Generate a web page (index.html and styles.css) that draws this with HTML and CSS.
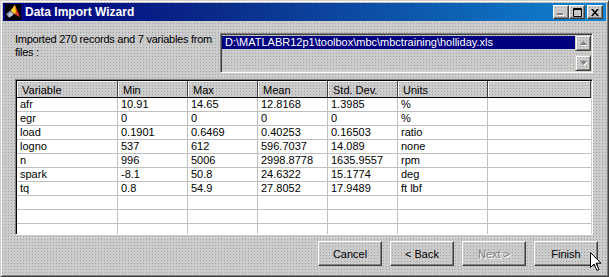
FILE: index.html
```html
<!DOCTYPE html>
<html lang="en">
<head>
    <meta charset="UTF-8">
    <meta name="viewport" content="width=device-width, initial-scale=1.0">
    <title>Data Import Wizard</title>
    <link rel="stylesheet" href="styles.css">
</head>
<body>
    <div class="window">
        <div class="titlebar">
            <svg class="app-icon" width="16" height="16" viewBox="0 0 16 16">
                <rect width="16" height="16" fill="#000"/>
                <polygon points="1,10 6,6 9,10 4,14" fill="#7b8aa8"/>
                <polygon points="6,6 10,1 15,13 9,10" fill="#e0401c"/>
                <polygon points="6,6 10,1 11,8 9,10" fill="#f8d020"/>
                <polygon points="3,11 6,8 8,11 5,13" fill="#c0c8d8"/>
            </svg>
            <span class="title">Data Import Wizard</span>
            <div class="caption-buttons">
                <span class="cap-btn">
                    <svg width="8" height="8" viewBox="0 0 8 8"><rect x="1" y="6" width="6" height="2" fill="#fff"/><rect x="0" y="5" width="6" height="2" fill="#808080"/></svg>
                </span>
                <span class="cap-btn">
                    <svg width="9" height="9" viewBox="0 0 9 9"><path d="M0.5 0.5h8v8h-8z M0 1.5h9" fill="none" stroke="#000"/></svg>
                </span>
                <span class="cap-btn close">
                    <svg width="8" height="7" viewBox="0 0 8 7"><path d="M0 0h2l2 2.5L6 0h2L5 3.5L8 7H6L4 4.5L2 7H0l3-3.5z" fill="#000"/></svg>
                </span>
            </div>
        </div>

        <div class="content">
            <div class="source">
                <p class="source-label">Imported 270 records and 7 variables from<br>files :</p>
                <div class="listbox">
                    <ul class="file-list">
                        <li class="selected">D:\MATLABR12p1\toolbox\mbc\mbctraining\holliday.xls</li>
                    </ul>
                    <div class="scrollbar">
                        <span class="scroll-btn">
                            <svg width="7" height="5" viewBox="0 0 7 5"><polygon points="4.5,1 8,5 1,5" fill="#fff"/><polygon points="3.5,0 7,4 0,4" fill="#808080"/></svg>
                        </span>
                        <span class="scroll-btn">
                            <svg width="7" height="5" viewBox="0 0 7 5"><polygon points="1,1 8,1 4.5,5" fill="#fff"/><polygon points="0,0 7,0 3.5,4" fill="#808080"/></svg>
                        </span>
                    </div>
                </div>
            </div>

            <div class="grid-box">
                <table class="grid">
                    <colgroup>
                        <col style="width:101px"><col style="width:70px"><col style="width:70px"><col style="width:70px"><col style="width:70px"><col style="width:90px"><col style="width:103px">
                    </colgroup>
                    <thead>
                        <tr><th>Variable</th><th>Min</th><th>Max</th><th>Mean</th><th>Std. Dev.</th><th>Units</th><th></th></tr>
                    </thead>
                    <tbody>
                        <tr><td>afr</td><td>10.91</td><td>14.65</td><td>12.8168</td><td>1.3985</td><td>%</td><td></td></tr>
                        <tr><td>egr</td><td>0</td><td>0</td><td>0</td><td>0</td><td>%</td><td></td></tr>
                        <tr><td>load</td><td>0.1901</td><td>0.6469</td><td>0.40253</td><td>0.16503</td><td>ratio</td><td></td></tr>
                        <tr><td>logno</td><td>537</td><td>612</td><td>596.7037</td><td>14.089</td><td>none</td><td></td></tr>
                        <tr><td>n</td><td>996</td><td>5006</td><td>2998.8778</td><td>1635.9557</td><td>rpm</td><td></td></tr>
                        <tr><td>spark</td><td>-8.1</td><td>50.8</td><td>24.6322</td><td>15.1774</td><td>deg</td><td></td></tr>
                        <tr><td>tq</td><td>0.8</td><td>54.9</td><td>27.8052</td><td>17.9489</td><td>ft lbf</td><td></td></tr>
                        <tr><td></td><td></td><td></td><td></td><td></td><td></td><td></td></tr>
                        <tr><td></td><td></td><td></td><td></td><td></td><td></td><td></td></tr>
                        <tr><td></td><td></td><td></td><td></td><td></td><td></td><td></td></tr>
                    </tbody>
                </table>
            </div>

            <div class="actions">
                <button class="push">Cancel</button>
                <button class="push">&lt; Back</button>
                <button class="push" disabled>Next &gt;</button>
                <button class="push">Finish</button>
                <svg class="cursor" width="12" height="20" viewBox="0 0 12 20">
                    <path d="M0.5 0.5v15l3.5-3.5 3 6.5 2-1-3-6.3h5z" fill="#fff" stroke="#000"/>
                </svg>
            </div>
        </div>
    </div>
</body>
</html>
```

FILE: styles.css
```css
* {
    box-sizing: border-box;
}

body {
    margin: 0;
    font-family: "Liberation Sans", Arial, sans-serif;
    font-size: 11px;
    background: #c8c8c8;
}

/* the dithered grey of the old MATLAB figure */
.window,
.cap-btn,
.listbox,
.scroll-btn,
.grid th,
.push {
    background-color: #cccccc;
    background-image: radial-gradient(circle, #a2a2a2 0 0.6px, transparent 0.9px);
    background-size: 3px 3px;
}

.window {
    width: 609px;
    height: 277px;
    padding: 2px;
    border: 1px solid;
    border-color: #d4d0c8 #404040 #404040 #d4d0c8;
    box-shadow: inset 1px 1px #fff, inset -1px -1px #808080;
    display: flex;
    flex-direction: column;
}

.titlebar {
    height: 18px;
    display: flex;
    align-items: center;
    padding: 0 3px 0 2px;
    background: linear-gradient(90deg, #000080 0%, #0a2a8a 35%, #1084d0 100%);
    color: #fff;
}

.app-icon {
    flex: none;
}

.title {
    flex: 1;
    margin-left: 4px;
    font-weight: bold;
    font-size: 12px;
}

.caption-buttons {
    display: flex;
}

.cap-btn {
    width: 16px;
    height: 14px;
    display: flex;
    align-items: center;
    justify-content: center;
    border: 1px solid;
    border-color: #fff #404040 #404040 #fff;
    box-shadow: inset -1px -1px #808080;
}

.cap-btn.close {
    margin-left: 2px;
}

.content {
    flex: 1;
    display: flex;
    flex-direction: column;
    padding: 12px 8px 8px 12px;
}

.source {
    display: flex;
    height: 40px;
    margin-right: 5px;
}

.source-label {
    width: 205px;
    flex: none;
    margin: 0;
    line-height: 13px;
    letter-spacing: -0.25px;
    white-space: nowrap;
    color: #000;
}

.listbox {
    flex: 1;
    display: flex;
    border: 1px solid;
    border-color: #808080 #fff #fff #808080;
    box-shadow: inset 1px 1px #404040, inset -1px -1px #d4d0c8;
    padding: 1px;
}

.file-list {
    flex: 1;
    list-style: none;
    margin: 0;
    padding: 0;
}

.file-list .selected {
    height: 13px;
    line-height: 13px;
    margin-top: 1px;
    padding-left: 3px;
    background: #000080;
    color: #fff;
    white-space: nowrap;
}

.scrollbar {
    width: 16px;
    display: flex;
    flex-direction: column;
    justify-content: space-between;
}

.scroll-btn {
    height: 16px;
    display: flex;
    align-items: center;
    justify-content: center;
    border: 1px solid;
    border-color: #d4d0c8 #404040 #404040 #d4d0c8;
    box-shadow: inset 1px 1px #fff, inset -1px -1px #808080;
}

.grid-box {
    height: 156px;
    margin: 6px 5px 0 0;
    overflow: hidden;
    border: 1px solid;
    border-color: #808080 #fff #fff #808080;
    padding: 1px;
    box-shadow: inset 1px 1px #000, inset -1px -1px #d4d0c8;
}

.grid {
    width: 574px;
    table-layout: fixed;
    border-collapse: separate;
    border-spacing: 0;
    background: #fff;
}

.grid th {
    height: 17px;
    padding: 2px 0 0 5px;
    text-align: left;
    font-weight: normal;
    line-height: 13px;
    border-right: 1px solid #404040;
    border-bottom: 1px solid #000;
    box-shadow: inset 1px 1px #fff;
    white-space: nowrap;
}

.grid td {
    height: 14px;
    padding: 0 0 0 3px;
    line-height: 13px;
    border-right: 1px solid #c0c0c0;
    border-bottom: 1px solid #c0c0c0;
    white-space: nowrap;
    overflow: hidden;
}

.grid td:last-child {
    border-right: none;
}

.actions {
    position: relative;
    display: flex;
    justify-content: flex-end;
    gap: 8px;
    margin-top: 6px;
}

.push {
    width: 64px;
    height: 25px;
    padding: 0;
    font-family: inherit;
    font-size: 11px;
    color: #000;
    border: 1px solid;
    border-color: #fff #404040 #404040 #fff;
    box-shadow: inset -1px -1px #808080;
}

.push:disabled {
    color: #808080;
    text-shadow: 1px 1px #fff;
}

.cursor {
    position: absolute;
    left: 575px;
    top: 11px;
}
```
